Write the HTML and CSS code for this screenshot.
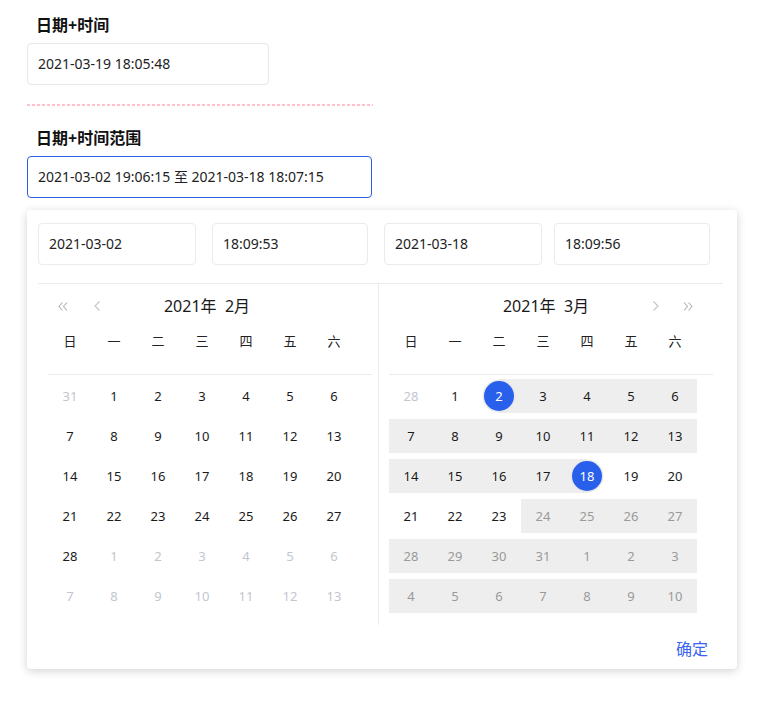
FILE: index.html
```html
<!DOCTYPE html>
<html lang="zh">
<head>
<meta charset="utf-8">
<link rel="stylesheet" href="styles.css">
</head>
<body>
<div class="page">
  <div class="label">日期+时间</div>
  <div class="input single">2021-03-19 18:05:48</div>
  <div class="divider"></div>
  <div class="label label2">日期+时间范围</div>
  <div class="input range">2021-03-02 19:06:15 至 2021-03-18 18:07:15</div>

  <div class="popup">
    <div class="top-inputs">
      <div class="pinput w158">2021-03-02</div>
      <div class="pinput w156 g16">18:09:53</div>
      <div class="pinput w158 g16">2021-03-18</div>
      <div class="pinput w156 g12">18:09:56</div>
    </div>
    <div class="cal-box">
      <div class="panel left">
        <div class="head head-left">
          <span class="arrow"><svg width="10" height="9" viewBox="0 0 10 9"><path d="M4.5 0.5 L1 4.5 L4.5 8.5 M9 0.5 L5.5 4.5 L9 8.5" fill="none" stroke="#b4b4b4" stroke-width="1.1"/></svg></span>
          <span class="arrow a2"><svg width="6" height="10" viewBox="0 0 6 10"><path d="M5.5 0.5 L1 5 L5.5 9.5" fill="none" stroke="#c4c4c4" stroke-width="1.1"/></svg></span>
          <span class="title">2021年&nbsp;&nbsp;2月</span>
          <span class="spacer-l"></span>
        </div>
        <div class="weeks"><span>日</span><span>一</span><span>二</span><span>三</span><span>四</span><span>五</span><span>六</span></div>
        <div class="days">
          <span class="faint">31</span><span>1</span><span>2</span><span>3</span><span>4</span><span>5</span><span>6</span>
          <span>7</span><span>8</span><span>9</span><span>10</span><span>11</span><span>12</span><span>13</span>
          <span>14</span><span>15</span><span>16</span><span>17</span><span>18</span><span>19</span><span>20</span>
          <span>21</span><span>22</span><span>23</span><span>24</span><span>25</span><span>26</span><span>27</span>
          <span>28</span><span class="faint">1</span><span class="faint">2</span><span class="faint">3</span><span class="faint">4</span><span class="faint">5</span><span class="faint">6</span>
          <span class="faint">7</span><span class="faint">8</span><span class="faint">9</span><span class="faint">10</span><span class="faint">11</span><span class="faint">12</span><span class="faint">13</span>
        </div>
      </div>
      <div class="panel right">
        <div class="head head-right">
          <span class="spacer-r"></span>
          <span class="title">2021年&nbsp;&nbsp;3月</span>
          <span class="arrow"><svg width="6" height="10" viewBox="0 0 6 10"><path d="M0.5 0.5 L5 5 L0.5 9.5" fill="none" stroke="#c4c4c4" stroke-width="1.1"/></svg></span>
          <span class="arrow a2"><svg width="10" height="9" viewBox="0 0 10 9"><path d="M1 0.5 L4.5 4.5 L1 8.5 M5.5 0.5 L9 4.5 L5.5 8.5" fill="none" stroke="#b4b4b4" stroke-width="1.1"/></svg></span>
        </div>
        <div class="weeks"><span>日</span><span>一</span><span>二</span><span>三</span><span>四</span><span>五</span><span>六</span></div>
        <div class="days">
          <span class="faint">28</span><span>1</span><span class="start"><i>2</i></span><span class="in">3</span><span class="in">4</span><span class="in">5</span><span class="in">6</span>
          <span class="in">7</span><span class="in">8</span><span class="in">9</span><span class="in">10</span><span class="in">11</span><span class="in">12</span><span class="in">13</span>
          <span class="in">14</span><span class="in">15</span><span class="in">16</span><span class="in">17</span><span class="end"><i>18</i></span><span>19</span><span>20</span>
          <span>21</span><span>22</span><span>23</span><span class="dis">24</span><span class="dis">25</span><span class="dis">26</span><span class="dis">27</span>
          <span class="dis">28</span><span class="dis">29</span><span class="dis">30</span><span class="dis">31</span><span class="dis">1</span><span class="dis">2</span><span class="dis">3</span>
          <span class="dis">4</span><span class="dis">5</span><span class="dis">6</span><span class="dis">7</span><span class="dis">8</span><span class="dis">9</span><span class="dis">10</span>
        </div>
      </div>
    </div>
    <div class="footer"><span class="ok">确定</span></div>
  </div>
</div>
</body>
</html>
```
FILE: styles.css
```css
* { box-sizing: border-box; }
html, body { margin: 0; padding: 0; background: #fff; }
body {
  font-family: "Noto Sans", "Noto Sans CJK SC", sans-serif;
  color: #1f1f1f;
}
.page { padding: 13px 0 40px 27px; }
.label {
  font-size: 16px;
  font-weight: bold;
  line-height: 24px;
  height: 24px;
  padding-left: 9px;
  color: #111;
}
.label2 { margin-top: 20px; }
.input {
  margin-top: 6px;
  height: 42px;
  border: 1px solid #e8e8e8;
  border-radius: 4px;
  padding-left: 10px;
  font-size: 14px;
  line-height: 40px;
  color: #222;
}
.single { width: 242px; }
.range { width: 345px; border-color: #2b5fe3; }
.divider {
  margin-top: 19px;
  width: 346px;
  height: 2px;
  background: repeating-linear-gradient(to right, #ffc0cb 0 3px, transparent 3px 5px);
}
.popup {
  margin-top: 12px;
  width: 710px;
  height: 459px;
  background: #fff;
  border-radius: 4px;
  box-shadow: 0 2px 10px rgba(0,0,0,0.18);
  padding: 13px 0 0 11px;
}
.top-inputs { display: flex; height: 42px; }
.pinput {
  height: 42px;
  border: 1px solid #ebebeb;
  border-radius: 4px;
  padding-left: 10px;
  font-size: 14px;
  line-height: 40px;
  color: #222;
}
.w158 { width: 158px; }
.w156 { width: 156px; }
.g16 { margin-left: 16px; }
.g12 { margin-left: 12px; }
.cal-box {
  margin-top: 18px;
  width: 685px;
  border-top: 1px solid #ebebeb;
  display: flex;
}
.panel { padding: 0 0 12px 10px; }
.left { width: 341px; border-right: 1px solid #ebebeb; padding-right: 6px; }
.right { width: 344px; padding-right: 10px; }
.head {
  height: 44px;
  display: flex;
  align-items: center;
}
.arrow {
  width: 20px;
  height: 20px;
  display: inline-flex;
  align-items: center;
  justify-content: center;
  flex: none;
}
.head-left { padding-left: 5px; }
.head-left .a2 { margin-left: 14px; }
.head-right { padding-right: 15px; }
.head-right .a2 { margin-left: 12px; }
.title {
  flex: 1;
  text-align: center;
  font-size: 16px;
  line-height: 22px;
  color: #1a1a1a;
  white-space: nowrap;
}
.spacer-l { width: 65px; flex: none; }
.spacer-r { width: 57px; flex: none; }
.weeks {
  display: grid;
  grid-template-columns: repeat(7, 44px);
  height: 47px;
  padding-bottom: 21px;
  border-bottom: 1px solid #ebebeb;
  font-size: 13px;
  line-height: 26px;
  color: #222;
}
.weeks span { text-align: center; }
.days {
  margin-top: 4px;
  display: grid;
  grid-template-columns: repeat(7, 44px);
  grid-auto-rows: 34px;
  row-gap: 6px;
  font-size: 13px;
  color: #1a1a1a;
}
.days span {
  display: flex;
  align-items: center;
  justify-content: center;
}
.days .faint { color: #c3c6ce; }
.days .in { background: #eeeeee; }
.days .dis { background: #eeeeee; color: #9a9a9a; }
.days .start { background: linear-gradient(to right, transparent 50%, #eeeeee 50%); }
.days .end { background: linear-gradient(to right, #eeeeee 50%, transparent 50%); }
.days i {
  font-style: normal;
  width: 30px;
  height: 30px;
  border-radius: 50%;
  background: #2860ec;
  color: #fff;
  display: flex;
  align-items: center;
  justify-content: center;
  box-shadow: 0 0 0 1.5px #e8e8e8;
}
.footer {
  height: 43px;
  margin-left: -11px;
  display: flex;
  align-items: center;
  justify-content: flex-end;
  padding-right: 29px;
  padding-top: 2px;
}
.ok { font-size: 16px; color: #3a63f0; }
```
